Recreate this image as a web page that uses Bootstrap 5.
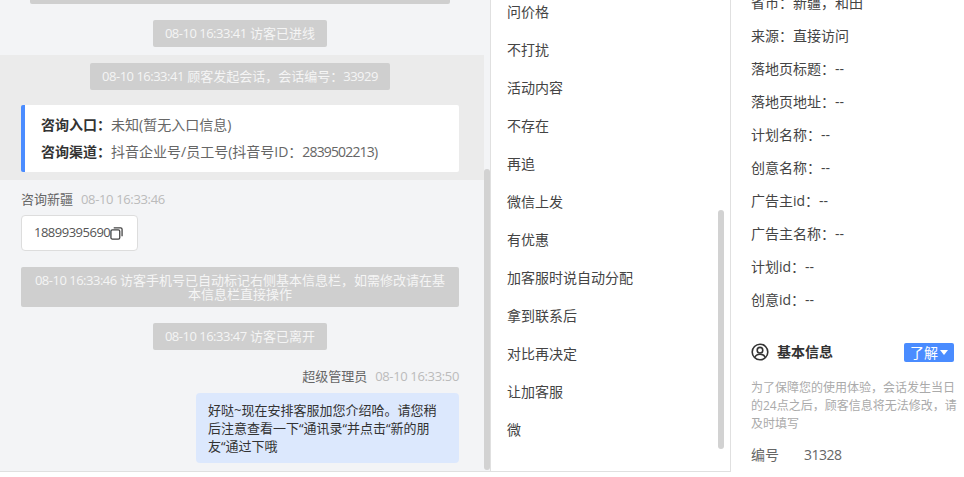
<!DOCTYPE html>
<html lang="zh-CN">
<head>
<meta charset="utf-8">
<title>会话</title>
<link href="https://cdn.jsdelivr.net/npm/bootstrap@5.3.0/dist/css/bootstrap.min.css" rel="stylesheet">
<style>
html,body{height:477px;overflow:hidden;background:#fff}
body{font-family:"Open Sans","Noto Sans CJK SC",sans-serif;font-size:14px;color:#333}
.shell{height:477px}
.nm{letter-spacing:-.5px}
.nm-tight{letter-spacing:-.85px}
.chat-pane{width:490px;height:472px;background:#f3f4f6;border-bottom:1px solid #e0e0e0;overflow:hidden;flex:none}
.chat-inner{width:484px}
.pill-line{padding:0 25px 0 21px}
.sys-pill{background:#cfcfcf;color:#f5f5f5;font-size:13px;line-height:27px;border-radius:2px;text-align:center;padding:0 12px}
.pill-cut{height:4px;margin:0 21px 0 30px;border-radius:0 0 2px 2px;width:420px}
.pill-wide{margin:0 25px 16px 21px;padding:6px 12px;line-height:14px}
.band{background:#ebebeb;padding:8px 25px 8px 21px;margin:8px 0 10px}
.entry-card{background:#fff;border-left:4px solid #4a8cff;border-radius:2px;padding:6px 16px 6px;line-height:27px;color:#666;margin-top:15px;height:67px}
.entry-card b{color:#333;font-weight:700}
.sender{font-size:13px;line-height:18px;color:#666;padding:0 25px 0 21px}
.sender-self{margin-top:17px}
.stamp{color:#bbb;margin-left:8px;letter-spacing:-.35px}
.phone-box{background:#fff;border:1px solid #ddd;border-radius:4px;height:36px;width:117px;margin:7px 0 16px 21px;font-size:13px;color:#555;padding-left:12px}
.bubble{width:263px;background:#dce8fd;border-radius:4px;margin:8px 25px 0 auto;padding:8px 19px 0 12px;font-size:13px;line-height:18px;height:70px;color:#333}
.tag-pane{width:241px;height:472px;border-left:1px solid #e0e0e0;border-right:1px solid #e0e0e0;border-bottom:1px solid #e0e0e0;overflow:hidden;flex:none}
.tag-row{height:38px;line-height:38px;padding-left:16px;color:#444;white-space:nowrap}
.tag-list{margin-top:-7px}
.info-pane{flex:1;min-width:0;padding-left:20px;overflow:hidden}
.info-list{margin-top:-14px}
.info-row{height:33px;line-height:33px;color:#444;white-space:nowrap}
.info-head{height:20px;margin-top:26px;padding-right:10px}
.info-title{font-weight:700;color:#333;margin-left:8px;line-height:20px}
.know-btn{margin-left:auto;width:50px;height:19px;background:#4a8cff;color:#fff;border-radius:2px;font-size:14px;line-height:19px}
.caret-mark{width:0;height:0;border-left:4px solid transparent;border-right:4px solid transparent;border-top:5px solid #fff;margin-left:2px}
.note{font-size:12px;line-height:18px;color:#aaa;margin-top:17px;width:210px}
.num-row{margin-top:11px;line-height:22px;color:#666}
.num-row span:first-child{width:53px}
.track{position:absolute;width:6px;background:#d2d2d2;border-radius:3px}
.track-a{left:484px;top:169px;height:301px}
.track-b{left:718px;top:210px;height:239px}
</style>
</head>
<body>
<div class="shell d-flex position-relative">
  <section class="chat-pane">
    <div class="chat-inner">
      <div class="sys-pill pill-cut"></div>
      <div class="pill-line d-flex justify-content-center mt-3"><div class="sys-pill"><span class="nm">08-10 16:33:41</span> 访客已进线</div></div>
      <div class="band">
        <div class="d-flex justify-content-center"><div class="sys-pill"><span class="nm">08-10 16:33:41</span> 顾客发起会话&#xFF0C;会话编号&#xFF1A;<span class="nm">33929</span></div></div>
        <div class="entry-card">
          <div><b>咨询入口&#xFF1A;</b>未知(暂无入口信息)</div>
          <div><b>咨询渠道&#xFF1A;</b>抖音企业号/员工号(抖音号ID&#xFF1A;<span class="nm-tight">2839502213</span>)</div>
        </div>
      </div>
      <div class="sender">咨询新疆<span class="stamp">08-10 16:33:46</span></div>
      <div class="phone-box d-flex align-items-center"><span class="nm">18899395690</span><svg width="13" height="13" viewBox="0 0 14 14" fill="none" stroke="#444" stroke-width="1.4"><rect x="1" y="3.2" width="9.5" height="9.8" rx="1.5"/><path d="M4 1h7.5a1.5 1.5 0 0 1 1.5 1.5V10"/></svg></div>
      <div class="sys-pill pill-wide"><span class="nm">08-10 16:33:46</span> 访客手机号已自动标记右侧基本信息栏&#xFF0C;如需修改请在基本信息栏直接操作</div>
      <div class="pill-line d-flex justify-content-center"><div class="sys-pill"><span class="nm">08-10 16:33:47</span> 访客已离开</div></div>
      <div class="sender text-end sender-self">超级管理员<span class="stamp">08-10 16:33:50</span></div>
      <div class="bubble">好哒~现在安排客服加您介绍哈。请您稍后注意查看一下“通讯录“并点击“新的朋友“通过下哦</div>
    </div>
  </section>
  <section class="tag-pane">
    <div class="tag-list">
      <div class="tag-row">问价格</div>
      <div class="tag-row">不打扰</div>
      <div class="tag-row">活动内容</div>
      <div class="tag-row">不存在</div>
      <div class="tag-row">再追</div>
      <div class="tag-row">微信上发</div>
      <div class="tag-row">有优惠</div>
      <div class="tag-row">加客服时说自动分配</div>
      <div class="tag-row">拿到联系后</div>
      <div class="tag-row">对比再决定</div>
      <div class="tag-row">让加客服</div>
      <div class="tag-row">微</div>
    </div>
  </section>
  <section class="info-pane">
    <div class="info-list">
      <div class="info-row">省市&#xFF1A;新疆&#xFF0C;和田</div>
      <div class="info-row">来源&#xFF1A;直接访问</div>
      <div class="info-row">落地页标题&#xFF1A;--</div>
      <div class="info-row">落地页地址&#xFF1A;--</div>
      <div class="info-row">计划名称&#xFF1A;--</div>
      <div class="info-row">创意名称&#xFF1A;--</div>
      <div class="info-row">广告主id&#xFF1A;--</div>
      <div class="info-row">广告主名称&#xFF1A;--</div>
      <div class="info-row">计划id&#xFF1A;--</div>
      <div class="info-row">创意id&#xFF1A;--</div>
    </div>
    <div class="info-head d-flex align-items-center">
      <svg width="18" height="18" viewBox="0 0 18 18" fill="none" stroke="#333" stroke-width="1.6"><circle cx="9" cy="9" r="7.8"/><circle cx="9" cy="7.2" r="2.8"/><path d="M3.8 14.6c.8-2.4 2.8-3.4 5.2-3.4s4.4 1 5.2 3.4"/></svg>
      <span class="info-title">基本信息</span>
      <div class="know-btn d-flex align-items-center justify-content-center">了解<span class="caret-mark"></span></div>
    </div>
    <div class="note">为了保障您的使用体验&#xFF0C;会话发生当日的24点之后&#xFF0C;顾客信息将无法修改&#xFF0C;请及时填写</div>
    <div class="num-row d-flex"><span>编号</span><span class="nm">31328</span></div>
  </section>
  <div class="track track-a"></div>
  <div class="track track-b"></div>
</div>
<script src="https://cdn.jsdelivr.net/npm/bootstrap@5.3.0/dist/js/bootstrap.bundle.min.js"></script>
</body>
</html>
